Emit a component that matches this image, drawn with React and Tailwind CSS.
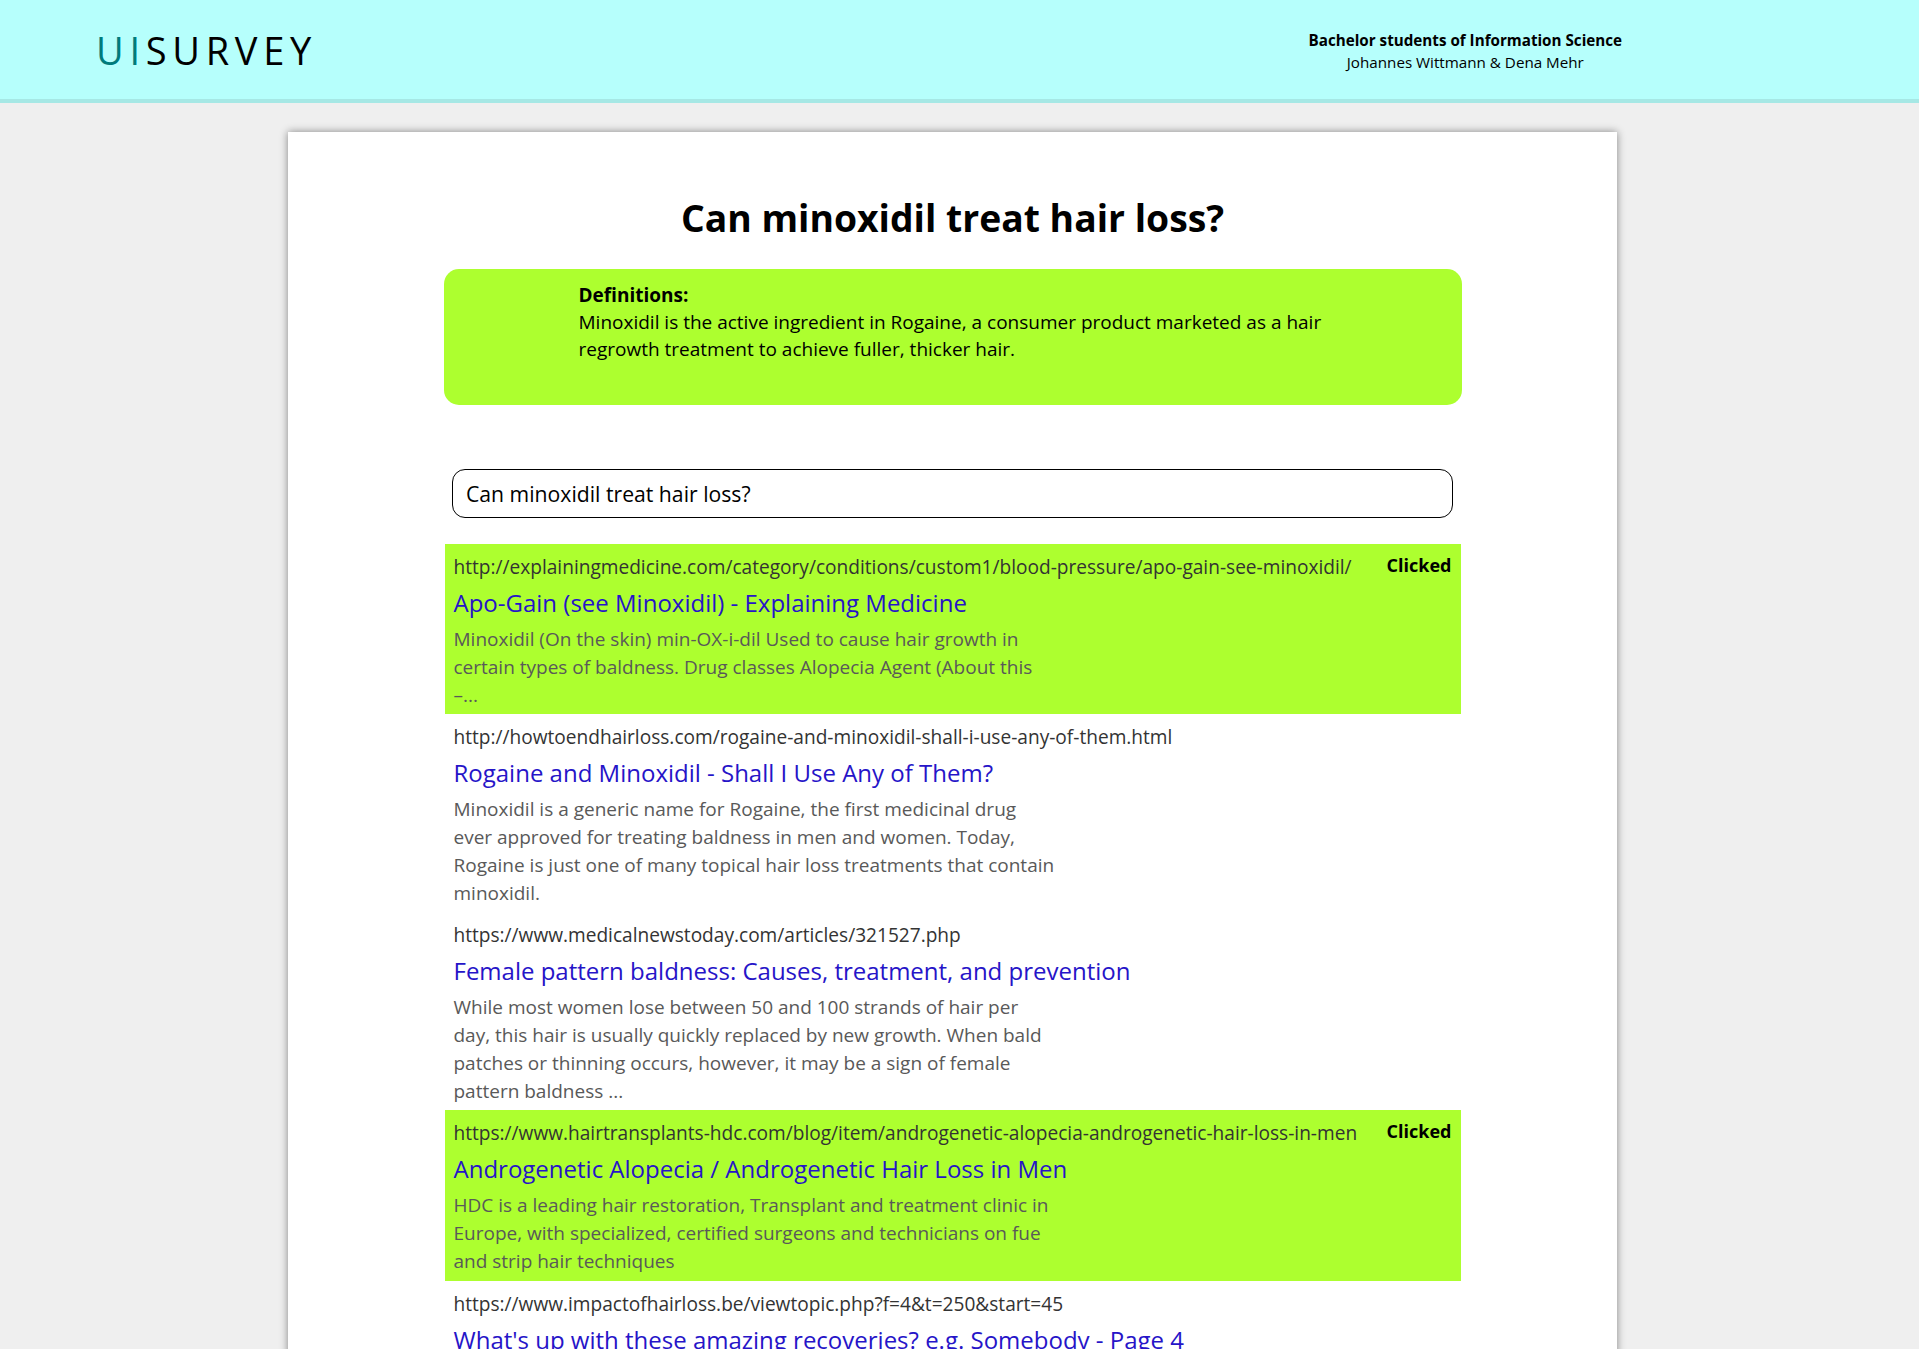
const results = [
  {
    url: 'http://explainingmedicine.com/category/conditions/custom1/blood-pressure/apo-gain-see-minoxidil/',
    title: 'Apo-Gain (see Minoxidil) - Explaining Medicine',
    snippet: [
      'Minoxidil (On the skin) min-OX-i-dil Used to cause hair growth in',
      'certain types of baldness. Drug classes Alopecia Agent (About this',
      '–...',
    ],
    clicked: true,
  },
  {
    url: 'http://howtoendhairloss.com/rogaine-and-minoxidil-shall-i-use-any-of-them.html',
    title: 'Rogaine and Minoxidil - Shall I Use Any of Them?',
    snippet: [
      'Minoxidil is a generic name for Rogaine, the first medicinal drug',
      'ever approved for treating baldness in men and women. Today,',
      'Rogaine is just one of many topical hair loss treatments that contain',
      'minoxidil.',
    ],
    clicked: false,
  },
  {
    url: 'https://www.medicalnewstoday.com/articles/321527.php',
    title: 'Female pattern baldness: Causes, treatment, and prevention',
    snippet: [
      'While most women lose between 50 and 100 strands of hair per',
      'day, this hair is usually quickly replaced by new growth. When bald',
      'patches or thinning occurs, however, it may be a sign of female',
      'pattern baldness ...',
    ],
    clicked: false,
  },
  {
    url: 'https://www.hairtransplants-hdc.com/blog/item/androgenetic-alopecia-androgenetic-hair-loss-in-men',
    title: 'Androgenetic Alopecia / Androgenetic Hair Loss in Men',
    snippet: [
      'HDC is a leading hair restoration, Transplant and treatment clinic in',
      'Europe, with specialized, certified surgeons and technicians on fue',
      'and strip hair techniques',
    ],
    clicked: true,
  },
  {
    url: 'https://www.impactofhairloss.be/viewtopic.php?f=4&t=250&start=45',
    title: "What's up with these amazing recoveries? e.g. Somebody - Page 4",
    snippet: [
      "Re: What's up with these amazing recoveries? e.g. Somebody",
      'Post by Dave » Thu Dec 20, 2018 ...',
    ],
    clicked: false,
  },
];

function ResultItem({ item }) {
  return (
    <div className={`px-[9px] pt-[9px] pb-[5px] ${item.clicked ? 'bg-[#adff2f]' : ''}`}>
      <div className="flex items-start justify-between gap-4">
        <div className="text-[19.1px] leading-[28px] text-[#333] whitespace-nowrap">{item.url}</div>
        {item.clicked && (
          <div className="text-[18px] leading-[24px] font-bold text-black">Clicked</div>
        )}
      </div>
      <a href="#" className="block mt-1 text-[24px] leading-[36px] text-[#2614c8] whitespace-nowrap">
        {item.title}
      </a>
      <p className="mt-[5px] text-[19px] leading-[27.75px] text-[#595959]">
        {item.snippet.map((line, i) => (
          <span key={i} className="block whitespace-nowrap">{line}</span>
        ))}
      </p>
    </div>
  );
}

export default function App() {
  return (
    <div className="min-h-screen bg-[#efefef] font-['Open_Sans',sans-serif]">
      <header className="h-[103px] bg-[#b6fffc] border-b-4 border-[#a6e8e5] flex items-center justify-between pl-[96px] pr-[297px]">
        <div className="text-[38px] tracking-[0.15em] leading-none">
          <span className="text-[#007b7b]">UI</span>
          <span className="text-black">SURVEY</span>
        </div>
        <div className="mt-[3px] text-center text-[15.2px] leading-[22px] text-black">
          <div className="font-bold">Bachelor students of Information Science</div>
          <div>Johannes Wittmann &amp; Dena Mehr</div>
        </div>
      </header>

      <main className="pl-[288px] pt-[29px]">
        <div className="w-[1329px] bg-white shadow-[0_0_8px_rgba(0,0,0,0.45)] pt-[62px] pb-10">
          <h1 className="text-center text-[37.3px] leading-[48px] font-bold text-black">
            Can minoxidil treat hair loss?
          </h1>

          <div className="mx-auto mt-[27px] w-[1018px] rounded-[15px] bg-[#adff2f] px-[135px] pt-[13px] pb-[42px] text-[19px] leading-[27px] text-black">
            <div className="font-bold">Definitions:</div>
            <p>
              Minoxidil is the active ingredient in Rogaine, a consumer product marketed as a hair regrowth treatment to achieve fuller, thicker hair.
            </p>
          </div>

          <div className="mx-auto mt-16 w-[1001px]">
            <input
              type="text"
              defaultValue="Can minoxidil treat hair loss?"
              className="w-full h-[49px] rounded-[13px] border border-black px-[13px] text-[21.2px] text-black outline-none"
            />
          </div>

          <div className="mx-auto mt-[26px] w-[1016px]">
            {results.map((item, index) => (
              <ResultItem key={index} item={item} />
            ))}
          </div>
        </div>
      </main>
    </div>
  );
}
